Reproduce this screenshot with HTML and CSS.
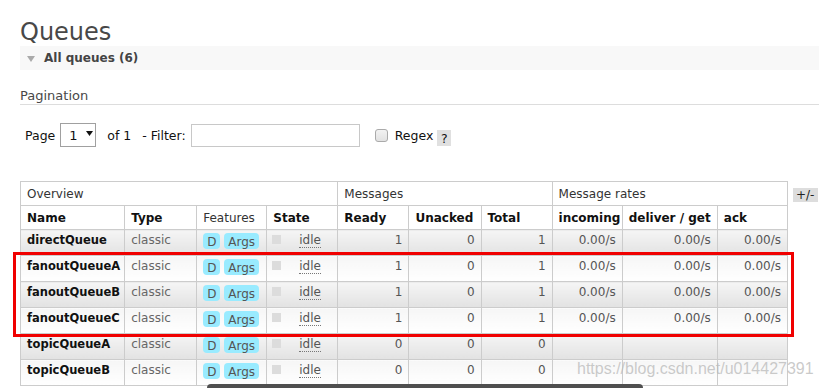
FILE: index.html
```html
<!DOCTYPE html>
<html>
<head>
<meta charset="utf-8">
<title>Queues</title>
<link rel="stylesheet" href="styles.css">
</head>
<body>
<div class="page">
  <h1 class="title">Queues</h1>
  <div class="section-bar"><span class="tri"></span><span class="section-title">All queues (6)</span></div>
  <h3 class="sub">Pagination</h3>
  <div class="pager">
    <span class="lbl">Page</span>
    <span class="select"><span class="sel-val">1</span><svg class="arrow" width="7" height="5" viewBox="0 0 7 5"><path d="M0 0H7L3.5 5Z" fill="#111"/></svg></span>
    <span class="of">of 1</span>
    <span class="filter">- Filter:</span>
    <span class="input"></span>
    <span class="checkbox"></span>
    <span class="regex">Regex</span>
    <span class="help">?</span>
  </div>
  <div class="table-wrap">
    <table class="list">
      <colgroup>
        <col class="c-name"><col class="c-type"><col class="c-feat"><col class="c-state">
        <col class="c-num"><col class="c-num2"><col class="c-num"><col class="c-rate"><col class="c-deliver"><col class="c-rate">
      </colgroup>
      <thead>
        <tr class="group">
          <th colspan="4">Overview</th>
          <th colspan="3">Messages</th>
          <th colspan="3">Message rates</th>
        </tr>
        <tr class="cols">
          <th>Name</th><th>Type</th><th class="plain">Features</th><th>State</th>
          <th>Ready</th><th>Unacked</th><th>Total</th>
          <th>incoming</th><th>deliver / get</th><th>ack</th>
        </tr>
      </thead>
      <tbody>
        <tr class="alt1">
          <td class="name">directQueue</td><td class="type">classic</td>
          <td><span class="badge">D</span> <span class="badge">Args</span></td>
          <td><span class="key"></span><span class="state">idle</span></td>
          <td class="r">1</td><td class="r">0</td><td class="r">1</td>
          <td class="r">0.00/s</td><td class="r">0.00/s</td><td class="r">0.00/s</td>
        </tr>
        <tr class="alt2">
          <td class="name">fanoutQueueA</td><td class="type">classic</td>
          <td><span class="badge">D</span> <span class="badge">Args</span></td>
          <td><span class="key"></span><span class="state">idle</span></td>
          <td class="r">1</td><td class="r">0</td><td class="r">1</td>
          <td class="r">0.00/s</td><td class="r">0.00/s</td><td class="r">0.00/s</td>
        </tr>
        <tr class="alt1">
          <td class="name">fanoutQueueB</td><td class="type">classic</td>
          <td><span class="badge">D</span> <span class="badge">Args</span></td>
          <td><span class="key"></span><span class="state">idle</span></td>
          <td class="r">1</td><td class="r">0</td><td class="r">1</td>
          <td class="r">0.00/s</td><td class="r">0.00/s</td><td class="r">0.00/s</td>
        </tr>
        <tr class="alt2">
          <td class="name">fanoutQueueC</td><td class="type">classic</td>
          <td><span class="badge">D</span> <span class="badge">Args</span></td>
          <td><span class="key"></span><span class="state">idle</span></td>
          <td class="r">1</td><td class="r">0</td><td class="r">1</td>
          <td class="r">0.00/s</td><td class="r">0.00/s</td><td class="r">0.00/s</td>
        </tr>
        <tr class="alt1">
          <td class="name">topicQueueA</td><td class="type">classic</td>
          <td><span class="badge">D</span> <span class="badge">Args</span></td>
          <td><span class="key"></span><span class="state">idle</span></td>
          <td class="r">0</td><td class="r">0</td><td class="r">0</td>
          <td></td><td></td><td></td>
        </tr>
        <tr class="alt2">
          <td class="name">topicQueueB</td><td class="type">classic</td>
          <td><span class="badge">D</span> <span class="badge">Args</span></td>
          <td><span class="key"></span><span class="state">idle</span></td>
          <td class="r">0</td><td class="r">0</td><td class="r">0</td>
          <td></td><td></td><td></td>
        </tr>
      </tbody>
    </table>
    <span class="plusminus">+/-</span>
  </div>
</div>
<div class="highlight"></div>
<div class="watermark">https://blog.csdn.net/u014427391</div>
<div class="bottom-bar"></div>
</body>
</html>
```
FILE: styles.css
```css
html, body {
  margin: 0;
  padding: 0;
  background: #fff;
}
body {
  font-family: "DejaVu Sans", Verdana, sans-serif;
  font-size: 12px;
  color: #484848;
  position: relative;
  overflow: hidden;
  height: 388px;
}
.page {
  padding-left: 20px;
}
.title {
  margin: 18px 0 0;
  font-size: 24px;
  line-height: 28px;
  font-weight: normal;
  color: #484848;
}
.section-bar {
  height: 24px;
  display: flex;
  align-items: center;
  background: #f8f8f8;
  padding-left: 7px;
}
.tri {
  width: 0;
  height: 0;
  border-left: 4.5px solid transparent;
  border-right: 4.5px solid transparent;
  border-top: 6px solid #aaa;
  margin-right: 9px;
  margin-top: 1px;
}
.section-title {
  font-weight: bold;
  color: #444;
  font-size: 12px;
}
.sub {
  margin: 18px 0 0;
  font-size: 13px;
  line-height: 15px;
  font-weight: normal;
  color: #484848;
  padding-bottom: 1px;
  border-bottom: 1px solid #ddd;
}
.pager {
  display: flex;
  align-items: center;
  height: 24px;
  margin-top: 18px;
  padding-left: 5px;
  font-size: 12.5px;
  color: #111;
}
.select {
  box-sizing: border-box;
  width: 36px;
  height: 24px;
  border: 1px solid #a0a0a0;
  margin-left: 5px;
  display: flex;
  align-items: center;
  padding-left: 8px;
}
.sel-val {
  font-size: 13px;
}
.arrow {
  margin-left: 8px;
  margin-top: -4px;
}
.of {
  margin-left: 11px;
}
.filter {
  margin-left: 11px;
}
.input {
  box-sizing: border-box;
  width: 169px;
  height: 23px;
  border: 1px solid #c8c8c8;
  margin-left: 5px;
  background: #fff;
}
.checkbox {
  box-sizing: border-box;
  width: 13px;
  height: 13px;
  border: 1px solid #aaa;
  border-radius: 3px;
  background: linear-gradient(#f2f2f2, #e2e2e2);
  margin-left: 15px;
}
.regex {
  margin-left: 7px;
}
.help {
  margin-left: 4px;
  width: 14px;
  height: 16px;
  line-height: 17px;
  text-align: center;
  background: #e0e0e0;
  align-self: flex-end;
  margin-bottom: 1px;
}
.table-wrap {
  display: flex;
  align-items: flex-start;
  margin-top: 34px;
}
.list {
  border-collapse: collapse;
  table-layout: fixed;
  width: 768px;
  flex: none;
}
.c-name { width: 104px; }
.c-type { width: 72px; }
.c-feat { width: 70px; }
.c-state { width: 71px; }
.c-num { width: 71px; }
.c-num2 { width: 72px; }
.c-rate { width: 70px; }
.c-deliver { width: 95px; }
.list th, .list td {
  border: 1px solid #ccc;
  padding: 0 6px;
  text-align: left;
  vertical-align: top;
  white-space: nowrap;
  overflow: hidden;
  line-height: 14px;
}
.list th {
  padding-top: 5px;
  color: #111;
  background: #fff;
}
.list tr.group th {
  font-weight: normal;
  color: #333;
}
.list th.plain {
  font-weight: normal;
  color: #333;
}
.list thead tr {
  height: 24px;
}
.list tbody tr {
  height: 26px;
}
.list td {
  padding-top: 3px;
  color: #555;
}
.list tr.alt1 td {
  background: linear-gradient(#f5f5f5, #e2e2e2);
}
.list tr.alt2 td {
  background: linear-gradient(#f6f6f6, #ffffff);
}
.list td.name {
  font-weight: bold;
  font-size: 11.5px;
  color: #111;
}
.list td.type {
  color: #666;
}
.list td.r {
  text-align: right;
}
.badge {
  display: inline-block;
  background: #99ebff;
  border-radius: 4px;
  padding: 2px 4px 0;
  height: 14px;
  line-height: 14px;
  color: #555;
  vertical-align: -2px;
}
.key {
  display: inline-block;
  width: 9px;
  height: 9px;
  background: #dcdcdc;
  margin-left: -1px;
  margin-right: 18px;
  margin-top: 2px;
  vertical-align: top;
}
.state {
  color: #555;
  border-bottom: 1px dotted #777;
}
.plusminus {
  margin-left: 5px;
  margin-top: 7px;
  height: 14px;
  line-height: 14px;
  padding: 0 4px 0 3px;
  background: #ddd;
  color: #222;
  white-space: nowrap;
  flex: none;
}
.highlight {
  position: absolute;
  left: 13px;
  top: 252px;
  width: 775px;
  height: 79px;
  border: 3px solid #f00000;
}
.watermark {
  position: absolute;
  left: 577px;
  top: 360px;
  font-family: "Liberation Sans", Arial, sans-serif;
  font-size: 16px;
  line-height: 18px;
  color: rgba(185, 185, 185, 0.75);
  white-space: nowrap;
}
.bottom-bar {
  position: absolute;
  left: 207px;
  top: 384px;
  width: 436px;
  height: 6px;
  background: #4f4f4f;
  border-radius: 4px 4px 0 0;
}
```
